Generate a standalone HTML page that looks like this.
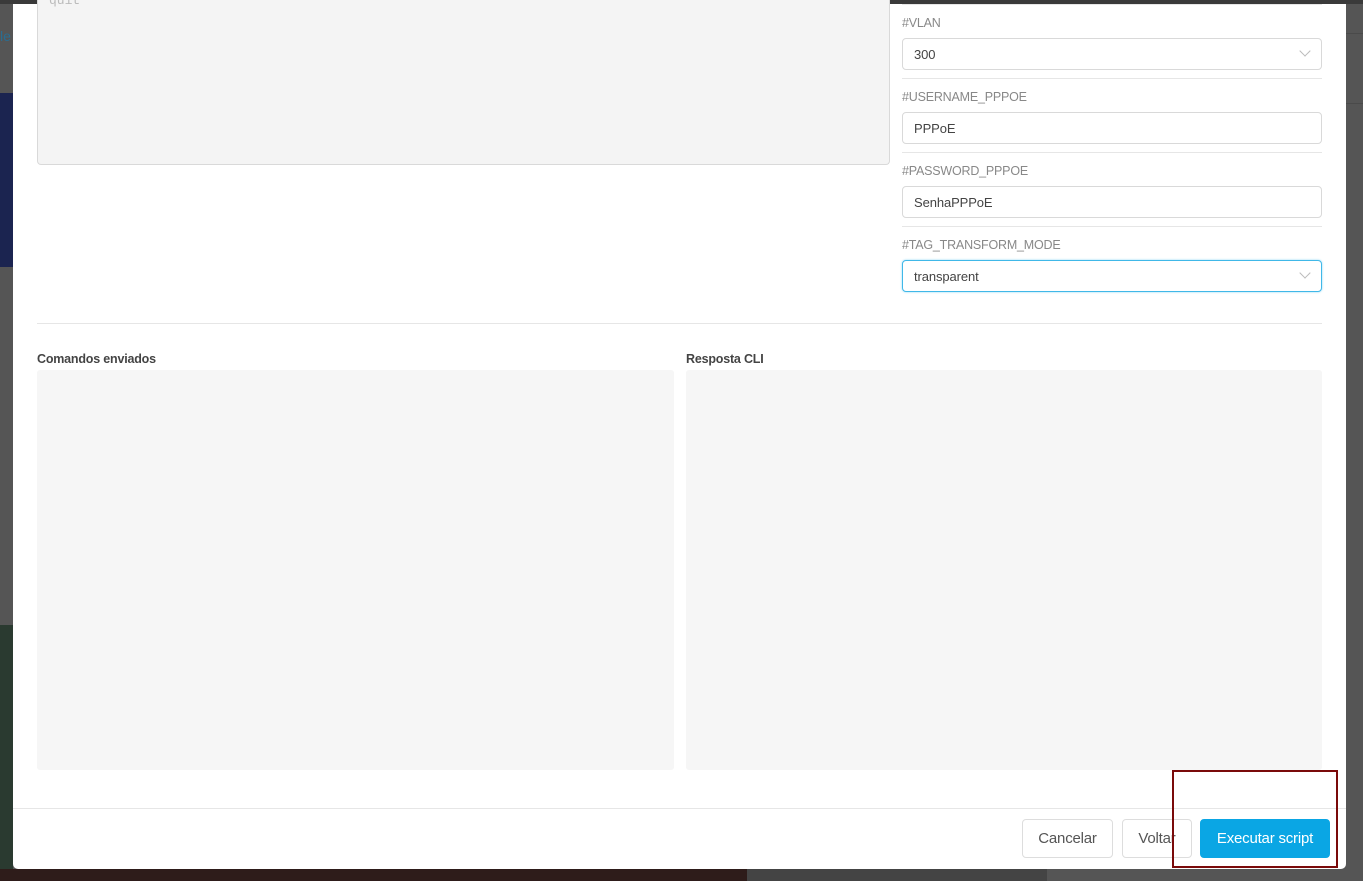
<!DOCTYPE html>
<html><head><meta charset="utf-8"><style>
*{box-sizing:border-box;margin:0;padding:0}
body{width:1363px;height:881px;overflow:hidden;position:relative;background:#555;font-family:"Source Sans Pro","Liberation Sans",sans-serif}
.a{position:absolute}
.lbl{position:absolute;left:902px;font-size:12.5px;color:#888;letter-spacing:-0.2px}
.inp{position:absolute;left:902px;width:420px;height:32px;border:1px solid #d9d9d9;border-radius:4px;font-size:13px;color:#444;padding:8px 11px;background:#fff;letter-spacing:-0.1px}
.hr{position:absolute;left:902px;width:420px;height:1px;background:#e6e6e6}
.chev{position:absolute;right:12px;top:8px;width:8px;height:8px;border-right:1px solid #bbb;border-bottom:1px solid #bbb;transform:rotate(45deg)}
.btn{position:absolute;top:819px;height:39px;border:1px solid #ddd;border-radius:4px;font-size:15px;color:#555;background:#fff;text-align:center;line-height:38px;letter-spacing:-0.2px}
</style></head><body>
<div class="a" style="left:0;top:0;width:1363px;height:4px;background:#3a3a3a"></div>
<div class="a" style="left:0;top:4px;width:13px;height:84px;background:#555"></div>
<div class="a" style="left:0;top:28px;font-size:14px;color:#2a6d91">le</div>
<div class="a" style="left:0;top:93px;width:13px;height:174px;background:#1b2450"></div>
<div class="a" style="left:0;top:267px;width:13px;height:358px;background:#555"></div>
<div class="a" style="left:0;top:625px;width:13px;height:244px;background:#2a3a30"></div>
<div class="a" style="left:0;top:869px;width:747px;height:12px;background:#2e1c1a"></div>
<div class="a" style="left:747px;top:869px;width:300px;height:12px;background:#444"></div>
<div class="a" style="left:1346px;top:33px;width:17px;height:1px;background:#4a4a4a"></div>
<div class="a" style="left:1346px;top:103px;width:17px;height:1px;background:#4a4a4a"></div>
<div class="a" style="left:13px;top:4px;width:1333px;height:865px;background:#fff;border-radius:0 0 5px 5px"></div>
<div class="a" style="left:37px;top:0;width:853px;height:165px;background:#f4f4f4;border:1px solid #d9d9d9;border-top:none;border-radius:0 0 4px 4px"></div>
<div class="a" style="left:49px;top:-7px;font-family:'Liberation Mono',monospace;font-size:13px;color:#bbb">quit</div>
<div class="hr" style="top:4px"></div>
<div class="lbl" style="top:16px">#VLAN</div>
<div class="inp" style="top:38px">300<div class="chev"></div></div>
<div class="hr" style="top:78px"></div>
<div class="lbl" style="top:90px">#USERNAME_PPPOE</div>
<div class="inp" style="top:112px">PPPoE</div>
<div class="hr" style="top:152px"></div>
<div class="lbl" style="top:164px">#PASSWORD_PPPOE</div>
<div class="inp" style="top:186px">SenhaPPPoE</div>
<div class="hr" style="top:226px"></div>
<div class="lbl" style="top:238px">#TAG_TRANSFORM_MODE</div>
<div class="inp" style="top:260px;border-color:#40b8e8;box-shadow:0 0 2px #8fd6f5">transparent<div class="chev"></div></div>
<div class="a" style="left:37px;top:323px;width:1285px;height:1px;background:#e6e6e6"></div>
<div class="a" style="left:37px;top:352px;font-size:12.5px;font-weight:bold;color:#444;letter-spacing:-0.2px">Comandos enviados</div>
<div class="a" style="left:686px;top:352px;font-size:12.5px;font-weight:bold;color:#444;letter-spacing:-0.2px">Resposta CLI</div>
<div class="a" style="left:37px;top:370px;width:637px;height:400px;background:#f6f6f6;border-radius:3px"></div>
<div class="a" style="left:686px;top:370px;width:636px;height:400px;background:#f6f6f6;border-radius:3px"></div>
<div class="a" style="left:13px;top:808px;width:1333px;height:1px;background:#e6e6e6"></div>
<div class="btn" style="left:1022px;width:91px">Cancelar</div>
<div class="btn" style="left:1122px;width:70px">Voltar</div>
<div class="btn" style="left:1200px;width:130px;background:#0aa6e4;border-color:#0aa6e4;color:#fff">Executar script</div>
<div class="a" style="left:1172px;top:770px;width:166px;height:98px;border:2px solid #7a0a0a"></div>
</body></html>
